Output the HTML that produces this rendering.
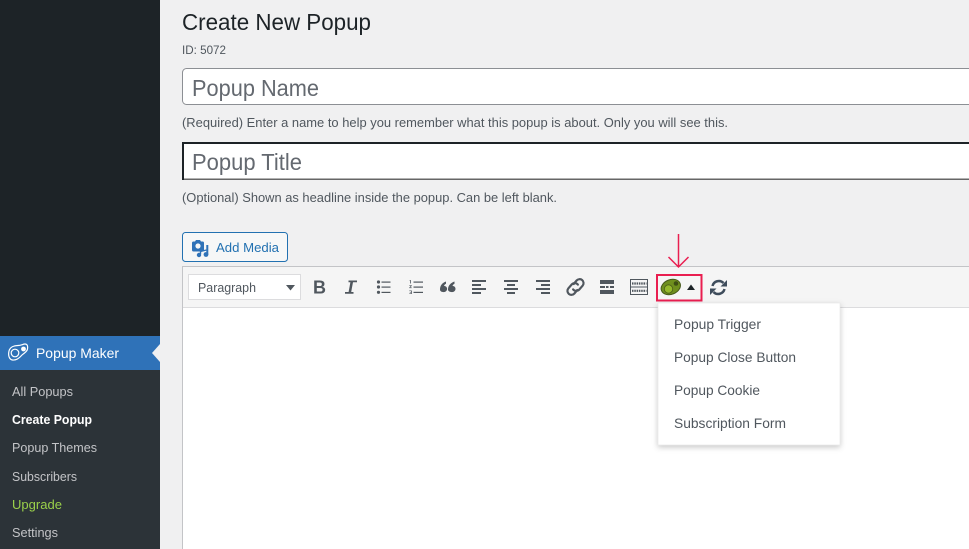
<!DOCTYPE html>
<html lang="en"><head><meta charset="utf-8"><title>Create New Popup</title>
<style>
html,body{margin:0;padding:0;width:969px;height:549px;overflow:hidden;background:#f0f0f1}
svg{display:block}
text{font-family:"Liberation Sans",sans-serif;white-space:pre}
</style></head><body>
<svg width="969" height="549" viewBox="0 0 969 549" xmlns="http://www.w3.org/2000/svg">
<defs><filter id="sh" x="-10%" y="-10%" width="120%" height="125%"><feDropShadow dx="0" dy="2" stdDeviation="3" flood-color="#000" flood-opacity=".22"/></filter></defs>
<rect width="969" height="549" fill="#f0f0f1"/>

<!-- sidebar -->
<rect width="160" height="549" fill="#1d2327"/>
<rect y="336" width="160" height="34" fill="#2f72b8"/>
<rect y="370" width="160" height="179" fill="#2c3338"/>
<path d="M160 344L152 353L160 362Z" fill="#f0f0f1"/>
<g fill="none" stroke="#fff" stroke-width="1.2">
<path d="M9 351C10 347 14 345.500 18 345.500C21 345.500 23 344 25 344C27.500 344 28 346.500 27.500 349C27 352 24 353 22 355C19 358.500 16 360.500 12.500 360C9 359.500 8 355 9 351Z"/>
<circle cx="15" cy="353" r="3.800"/>
</g>
<circle cx="23.500" cy="349" r="2.400" fill="#fff"/>
<text x="36" y="358" font-size="14" fill="#fff" textLength="83" lengthAdjust="spacingAndGlyphs">Popup Maker</text>
<g font-size="13" fill="#c3c4c7">
<text x="12" y="396" textLength="61" lengthAdjust="spacingAndGlyphs">All Popups</text>
<text x="12" y="424" fill="#fff" font-weight="700" textLength="80" lengthAdjust="spacingAndGlyphs">Create Popup</text>
<text x="12" y="452" textLength="85" lengthAdjust="spacingAndGlyphs">Popup Themes</text>
<text x="12" y="481" textLength="65" lengthAdjust="spacingAndGlyphs">Subscribers</text>
<text x="12" y="509" fill="#9ad04a" textLength="50" lengthAdjust="spacingAndGlyphs">Upgrade</text>
<text x="12" y="537" textLength="46" lengthAdjust="spacingAndGlyphs">Settings</text>
</g>

<!-- heading -->
<text x="182" y="30" font-size="23" fill="#1d2327" textLength="189" lengthAdjust="spacingAndGlyphs">Create New Popup</text>
<text x="182" y="54" font-size="12" fill="#50575e" textLength="44" lengthAdjust="spacingAndGlyphs">ID: 5072</text>

<!-- name input -->
<rect x="182.500" y="68.500" width="820" height="36" rx="4" fill="#fff" stroke="#8c8f94"/>
<text x="192" y="96" font-size="23" fill="#646970" textLength="127" lengthAdjust="spacingAndGlyphs">Popup Name</text>
<text x="182" y="127" font-size="13" fill="#50575e" textLength="546" lengthAdjust="spacingAndGlyphs">(Required) Enter a name to help you remember what this popup is about. Only you will see this.</text>

<!-- title input -->
<rect x="182" y="142" width="800" height="38" fill="#666"/>
<rect x="182" y="142" width="800" height="2" fill="#1d2327"/>
<rect x="182" y="142" width="2" height="38" fill="#1d2327"/>
<rect x="184" y="144" width="790" height="34.500" fill="#fff"/>
<text x="192" y="170" font-size="23" fill="#646970" textLength="110" lengthAdjust="spacingAndGlyphs">Popup Title</text>
<text x="182" y="202" font-size="13" fill="#50575e" textLength="375" lengthAdjust="spacingAndGlyphs">(Optional) Shown as headline inside the popup. Can be left blank.</text>

<!-- add media -->
<rect x="182.500" y="232.500" width="105" height="29" rx="3" fill="#f6f7f7" stroke="#2271b1"/>
<path d="M192 243a1.500 1.500 0 0 1 1.500-1.500h1.500l1-1.500h4l1 1.500h1.500a1.500 1.500 0 0 1 1.500 1.500v7a1.500 1.500 0 0 1-1.500 1.500h-9a1.500 1.500 0 0 1-1.500-1.500z" fill="#2f72b8"/>
<circle cx="198" cy="246" r="2.600" fill="#f6f7f7"/>
<path d="M200.500 254v-2.500l6-1.500" fill="none" stroke="#2f72b8" stroke-width="1.400"/>
<rect x="206.300" y="245" width="2" height="9.500" fill="#2f72b8"/>
<circle cx="199" cy="255" r="2.200" fill="#2f72b8"/><circle cx="206" cy="254.500" r="2.400" fill="#2f72b8"/>
<text x="216" y="252" font-size="13" fill="#2271b1" textLength="63" lengthAdjust="spacingAndGlyphs">Add Media</text>

<!-- editor -->
<rect x="182.500" y="266.500" width="800" height="300" fill="#fff" stroke="#c3c4c7"/>
<rect x="183" y="267" width="786" height="40" fill="#f5f5f5"/>
<rect x="183" y="307" width="786" height="1" fill="#dcdcde"/>

<!-- format select -->
<rect x="188.500" y="274.500" width="112" height="25" fill="#fff" stroke="#dcdcde"/>
<text x="198" y="292" font-size="13" fill="#50575e" textLength="58" lengthAdjust="spacingAndGlyphs">Paragraph</text>
<path d="M286 285h9l-4.500 5.500z" fill="#50575e"/>

<!-- toolbar icons -->
<text x="313" y="293.500" font-size="18" font-weight="700" fill="#50575e" textLength="13" lengthAdjust="spacingAndGlyphs">B</text>
<text x="348" y="293.500" font-size="18" font-weight="700" font-style="italic" fill="#50575e">I</text>
<path d="M348.500 280.500h8.500v1.800h-8.500zM345 292h8.500v1.800h-8.500z" fill="#50575e"/>
<g fill="#50575e">
<circle cx="378.500" cy="282" r="1.600"/><circle cx="378.500" cy="287" r="1.600"/><circle cx="378.500" cy="292.300" r="1.600"/>
<rect x="381.500" y="281.500" width="9" height="1.200"/><rect x="381.500" y="286.500" width="9" height="1.200"/><rect x="381.500" y="291.800" width="9" height="1.200"/>
<rect x="413.500" y="281.500" width="9.500" height="1.200"/><rect x="413.500" y="286.500" width="9.500" height="1.200"/><rect x="413.500" y="291.800" width="9.500" height="1.200"/>
<path d="M409.500 280.500l1.500-.5v3.500h-.8v-2.700l-.7.200zM409.300 285.300h2.500v.5l-1.500 1.700h1.500v.6h-2.500v-.5l1.500-1.700h-1.500zM409.300 290.500h2.500v3.500h-2.500v-.6h1.700v-.9h-1.200v-.5h1.200v-.9h-1.700z"/>
<path d="M440 289.500c0-4 2.300-6.800 6-8v2.300c-1.200.6-1.800 1.300-1.900 2.200 1.800 0 3 1.200 3 2.900s-1.400 3.200-3.500 3.200-3.600-1-3.600-2.600zM448 289.500c0-4 2.800-6.800 6.500-8v2.300c-1.200.6-1.800 1.300-1.900 2.200 1.800 0 2.900 1.200 2.900 2.900s-1.400 3.200-3.500 3.200-4-1-4-2.600z"/>
<rect x="472" y="280" width="14" height="2"/><rect x="472" y="284" width="9" height="2"/><rect x="472" y="288" width="14" height="2"/><rect x="472" y="292" width="9" height="2"/>
<rect x="504" y="280" width="14" height="2"/><rect x="507" y="284" width="8" height="2"/><rect x="504" y="288" width="14" height="2"/><rect x="507" y="292" width="8" height="2"/>
<rect x="536" y="280" width="14" height="2"/><rect x="541" y="284" width="9" height="2"/><rect x="536" y="288" width="14" height="2"/><rect x="541" y="292" width="9" height="2"/>
<rect x="600" y="280" width="14" height="4"/><rect x="600" y="286" width="5" height="2"/><rect x="606" y="286" width="2.500" height="2"/><rect x="610" y="286" width="4" height="2"/><rect x="600" y="290" width="14" height="4"/>
</g>
<g fill="none" stroke="#50575e" stroke-linecap="round" transform="translate(575.500 287) scale(1.200) translate(-575.500 -287)">
<path d="M574 284.500l2.500-3a3.300 3.300 0 0 1 5 4.300l-3 3.500a3.300 3.300 0 0 1-5-.3" stroke-width="1.800"/>
<path d="M577 289.500l-2.500 3a3.300 3.300 0 0 1-5-4.300l3-3.500a3.300 3.300 0 0 1 5 .3" stroke-width="1.800"/>
</g>
<g fill="none" stroke="#50575e" stroke-width="1">
<rect x="630.500" y="279.500" width="17" height="15"/>
<path d="M630.500 287h17"/>
<path d="M632 283.500h14.500M632 290.800h14.500" stroke-width="2.200" stroke-dasharray="1.500 .8"/>
</g>

<!-- popup maker button -->
<ellipse cx="670.800" cy="287" rx="10" ry="7.300" transform="rotate(-22 670.800 287)" fill="#6f8f1e" stroke="#46591a" stroke-width="1"/>
<circle cx="668.500" cy="289" r="4.200" fill="#94b82b" stroke="#4a5c18" stroke-width=".8"/>
<circle cx="676" cy="283.500" r="2.300" fill="#3e4f14"/>
<path d="M687 290l4-5.500 4 5.500z" fill="#1d2327"/>
<g fill="none" stroke="#3f4d5c" stroke-width="2.500">
<path d="M712.500 286a6.500 6.500 0 0 1 11-3"/><path d="M724.500 289a6.500 6.500 0 0 1-11 3"/>
</g>
<path d="M727 280v6.500h-6.500zM710 295v-6.500h6.500z" fill="#3f4d5c"/>

<!-- red highlight + arrow -->
<rect x="657" y="275" width="44.500" height="25.500" fill="none" stroke="#e91e50" stroke-width="2"/>
<path d="M678.500 234v33M668.500 257l10 10 10-10" fill="none" stroke="#e91e50" stroke-width="1.500"/>

<!-- dropdown -->
<rect x="658" y="303" width="182" height="142" fill="#fff" stroke="#e5e5e5" stroke-width=".6" filter="url(#sh)"/>
<g font-size="14" fill="#50575e">
<text x="674" y="329" textLength="87" lengthAdjust="spacingAndGlyphs">Popup Trigger</text>
<text x="674" y="362" textLength="122" lengthAdjust="spacingAndGlyphs">Popup Close Button</text>
<text x="674" y="395" textLength="86" lengthAdjust="spacingAndGlyphs">Popup Cookie</text>
<text x="674" y="428" textLength="112" lengthAdjust="spacingAndGlyphs">Subscription Form</text>
</g>
</svg>
</body></html>
